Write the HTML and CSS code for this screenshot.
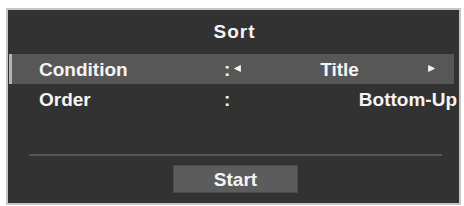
FILE: index.html
```html
<!DOCTYPE html>
<html lang="en">
<head>
    <meta charset="UTF-8">
    <meta name="viewport" content="width=device-width, initial-scale=1.0">
    <title>Sort</title>
    <link rel="stylesheet" href="styles.css">
</head>
<body>
    <div class="panel">
        <div class="panel-title">Sort</div>
        <div class="option selected">
            <span class="label">Condition</span>
            <span class="colon">:</span>
            <div class="value choice">
                <svg class="arrow" width="7" height="7" viewBox="0 0 7 7"><polygon points="6.5,0.5 6.5,6.5 0.5,3.5" fill="#f4f4f4" stroke="#f4f4f4" stroke-width="0.8" stroke-linejoin="round"/></svg>
                <span class="choice-text">Title</span>
                <svg class="arrow" width="7" height="7" viewBox="0 0 7 7"><polygon points="0.5,0.5 0.5,6.5 6.5,3.5" fill="#f4f4f4" stroke="#f4f4f4" stroke-width="0.8" stroke-linejoin="round"/></svg>
            </div>
        </div>
        <div class="option">
            <span class="label">Order</span>
            <span class="colon">:</span>
            <div class="value plain">Bottom-Up</div>
        </div>
        <div class="divider"></div>
        <button class="start-btn">Start</button>
    </div>
</body>
</html>
```

FILE: styles.css
```css
body {
    margin: 0;
    background-color: #ffffff;
    font-family: "Liberation Sans", Arial, sans-serif;
}

.panel {
    margin: 8px 0 0 6px;
    width: 451px;
    height: 193px;
    border: 2px solid #c6c6c6;
    background-color: #323232;
    color: #f4f4f4;
    font-weight: bold;
    font-size: 19px;
    display: flex;
    flex-direction: column;
}

.panel-title {
    height: 44px;
    line-height: 44px;
    text-align: center;
    letter-spacing: 1px;
    padding-left: 2px;
}

.option {
    display: flex;
    align-items: center;
    height: 30px;
    padding-top: 2px;
    box-sizing: border-box;
    margin: 0 5px 0 1px;
    padding-left: 27px;
    border-left: 3px solid transparent;
}

.option.selected {
    background-color: #575757;
    border-left-color: #b4b4b4;
}

.label {
    width: 185px;
}

.colon {
    width: 10px;
}

.value {
    flex: 1;
}

.choice {
    display: flex;
    align-items: center;
    justify-content: space-between;
    padding-right: 19px;
}

.choice .arrow {
    margin-top: -3px;
}

.choice-text {
    margin-left: 10px;
}

.plain {
    text-align: right;
    margin-right: -3px;
}

.divider {
    height: 2px;
    margin: 40px 17px 0 21px;
    background-color: #565656;
}

.start-btn {
    align-self: center;
    margin: 9px 0 0 4px;
    width: 125px;
    height: 28px;
    border: 1px solid #4a4a4a;
    background-color: #5c5c5c;
    color: #f4f4f4;
    font-family: inherit;
    font-weight: bold;
    font-size: 19px;
    padding: 2px 0 0 0;
}
```
